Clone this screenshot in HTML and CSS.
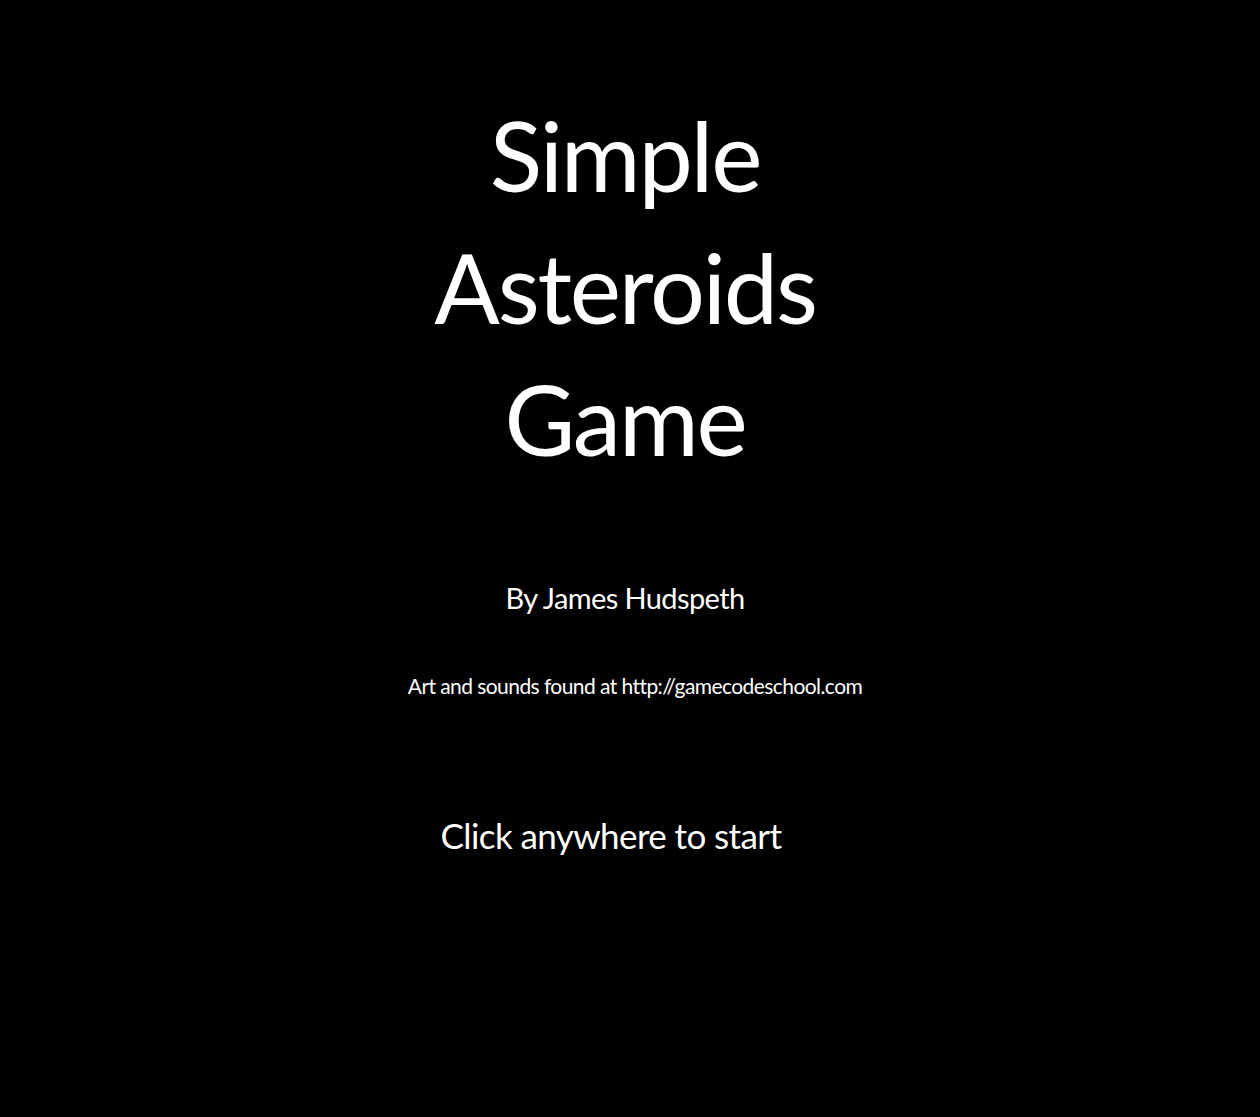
FILE: index.html
```html
<!DOCTYPE html>
<html>
<head>
<meta charset="utf-8">
<title>Simple Asteroids Game</title>
<link rel="stylesheet" href="styles.css">
</head>
<body>
<main class="screen">
  <h1 class="title">Simple<br>Asteroids<br>Game</h1>
  <p class="author">By James Hudspeth</p>
  <p class="credit">Art and sounds found at http://gamecodeschool.com</p>
  <p class="start">Click anywhere to start</p>
</main>
</body>
</html>
```
FILE: styles.css
```css
html, body {
  margin: 0;
  padding: 0;
  background: #000;
  height: 100%;
}
.screen {
  width: 1250px;
  min-height: 1117px;
  display: flex;
  flex-direction: column;
  color: #fff;
  font-family: Lato, "Open Sans", sans-serif;
  text-align: center;
  box-sizing: border-box;
  padding-top: 89px;
}
.screen p, .screen h1 {
  margin: 0;
  font-weight: 400;
}
.title {
  font-size: 97px;
  line-height: 132px;
  letter-spacing: -2.2px;
}
.author {
  margin-top: 96px !important;
  font-size: 29px;
  line-height: 1.2;
  letter-spacing: -0.6px;
}
.credit {
  margin-top: 57px !important;
  font-size: 21px;
  line-height: 1.2;
  padding-left: 20px;
  letter-spacing: -0.57px;
}
.start {
  margin-top: 116px !important;
  font-size: 35px;
  line-height: 1.2;
  padding-right: 28px;
  letter-spacing: -0.6px;
}
```
